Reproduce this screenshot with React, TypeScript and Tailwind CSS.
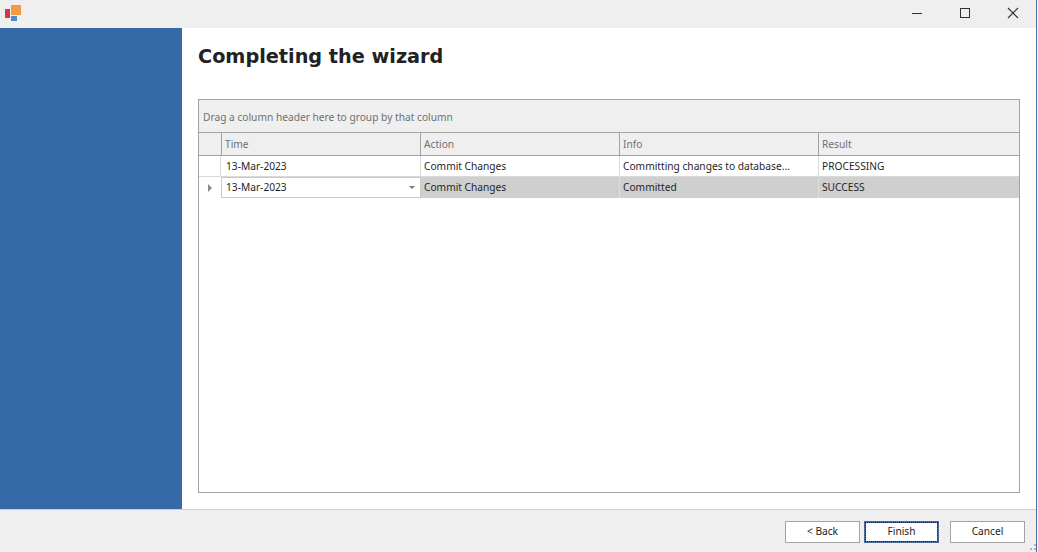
import React from "react";

function HeaderCell({ label, w }: { label: string; w: string }) {
  return (
    <div className={`${w} shrink-0 h-full border-l border-[#a3a3a3] pl-[3px] leading-[22px] text-[#6f6f6f]`}>
      {label}
    </div>
  );
}

function Cell({ label, w, selected, last }: { label: string; w: string; selected?: boolean; last?: boolean }) {
  return (
    <div
      className={`${w} shrink-0 h-full pl-[3px] leading-[20px] truncate ${last ? "" : "border-r"} ${
        selected ? "border-[#dedede] bg-[#cfcfcf]" : "border-[#d9d9d9] bg-white"
      }`}
    >
      {label}
    </div>
  );
}

export default function App() {
  return (
    <div className="w-[1038px] h-[552px] flex overflow-hidden bg-white text-[#1f1f1f] text-[10.2px] font-['Noto_Sans',sans-serif]">
      <div className="w-[1036px] shrink-0 flex flex-col relative">
        <div className="h-[28px] shrink-0 flex items-center bg-[#efefef]">
          <svg width="18" height="18" viewBox="0 0 18 18" className="ml-[5px]">
            <rect x="0" y="4" width="5" height="9" fill="#d9344e" />
            <rect x="6" y="0" width="10" height="10" fill="#f49a42" />
            <rect x="6" y="11" width="6" height="5" fill="#4f8ccb" />
          </svg>
          <div className="ml-auto flex items-center pb-[2px]">
            <svg width="12" height="12" viewBox="0 0 12 12" className="mr-[36px]">
              <path d="M1 6.5H11" stroke="#333" strokeWidth="1" />
            </svg>
            <svg width="12" height="12" viewBox="0 0 12 12" className="mr-[36px]">
              <rect x="1.5" y="1.5" width="9" height="9" fill="none" stroke="#333" strokeWidth="1" />
            </svg>
            <svg width="12" height="12" viewBox="0 0 12 12" className="mr-[17px]">
              <path d="M1 1L11 11M11 1L1 11" stroke="#333" strokeWidth="1.1" />
            </svg>
          </div>
        </div>

        <div className="flex-1 flex min-h-0">
          <div className="w-[182px] shrink-0 bg-[#3569a8]" />
          <div className="flex-1 pl-[16px] pr-[16px] pt-[17px] pb-[16px] flex flex-col min-w-0">
            <h1 className="h-[54px] shrink-0 text-[19.25px] leading-[24px] font-bold text-[#222] font-['DejaVu_Sans']">
              Completing the wizard
            </h1>
            <div className="flex-1 border border-[#a3a3a3] flex flex-col min-h-0">
              <div className="h-[33px] shrink-0 bg-[#efefef] border-b border-[#a3a3a3] pl-[4px] leading-[35px] text-[#6f6f6f]">
                Drag a column header here to group by that column
              </div>
              <div className="h-[23px] shrink-0 flex bg-[#efefef] border-b border-[#a3a3a3]">
                <div className="w-[22px] shrink-0" />
                <HeaderCell label="Time" w="w-[199px]" />
                <HeaderCell label="Action" w="w-[199px]" />
                <HeaderCell label="Info" w="w-[199px]" />
                <HeaderCell label="Result" w="flex-1" />
              </div>
              <div className="h-[21px] shrink-0 flex border-b border-[#d9d9d9]">
                <div className="w-[22px] shrink-0 border-r border-[#d9d9d9]" />
                <div className="w-[200px] shrink-0 h-full border-r border-[#d9d9d9] pl-[5px] leading-[20px]">13-Mar-2023</div>
                <Cell label="Commit Changes" w="w-[199px]" />
                <Cell label="Committing changes to database..." w="w-[199px]" />
                <Cell label="PROCESSING" w="flex-1 min-w-0" last />
              </div>
              <div className="h-[21px] shrink-0 flex">
                <div className="w-[22px] shrink-0 flex items-center justify-center">
                  <svg width="6" height="8" viewBox="0 0 6 8">
                    <path d="M1 0L5 4L1 8Z" fill="#8a8a8a" />
                  </svg>
                </div>
                <div className="w-[200px] shrink-0 h-full border border-[#c9c9c9] bg-white pl-[4px] flex items-center justify-between pr-[5px]">
                  <span className="leading-[16px] pb-[1px]">13-Mar-2023</span>
                  <svg width="6" height="3" viewBox="0 0 6 3">
                    <path d="M0 0H6L3 3Z" fill="#777" />
                  </svg>
                </div>
                <Cell label="Commit Changes" w="w-[199px]" selected />
                <Cell label="Committed" w="w-[199px]" selected />
                <Cell label="SUCCESS" w="flex-1 min-w-0" selected last />
              </div>
            </div>
          </div>
        </div>

        <div className="h-[43px] shrink-0 bg-[#efefef] border-t border-[#cfcfcf] flex items-start justify-end pt-[11px] pr-[11px]">
          <button className="w-[75px] h-[22px] bg-white border border-[#a3a3a3] text-[#222]">&lt; Back</button>
          <button className="ml-[4px] w-[75px] h-[22px] bg-white border-2 border-[#4a6a9c] outline-1 outline-dotted -outline-offset-2 outline-[#222] text-[#222]">Finish</button>
          <button className="ml-[11px] w-[75px] h-[22px] bg-white border border-[#a3a3a3] text-[#222]">Cancel</button>
        </div>
        <div className="absolute right-0 bottom-[2px] grid grid-cols-2 gap-[2px] w-[6px]">
          <span />
          <span className="size-[2px] bg-[#b5b5b5]" />
          <span className="size-[2px] bg-[#b5b5b5]" />
          <span className="size-[2px] bg-[#b5b5b5]" />
        </div>
      </div>
      <div className="w-[2px] shrink-0 border-l border-[#4a6ea9] bg-[#f4f4f4]" />
    </div>
  );
}
